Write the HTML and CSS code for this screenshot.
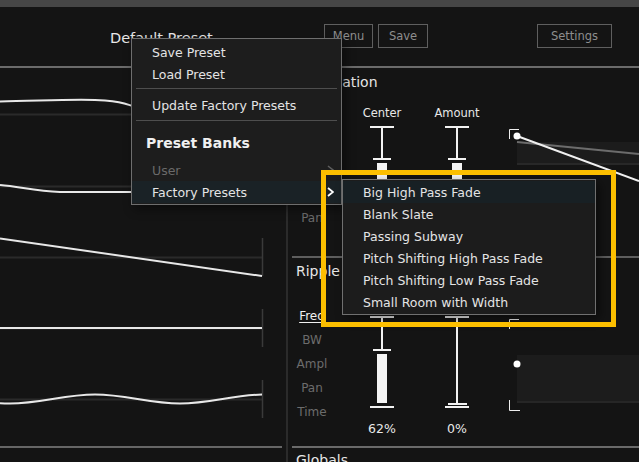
FILE: index.html
```html
<!DOCTYPE html>
<html lang="en">
<head>
<meta charset="utf-8">
<title>Preset Menu</title>
<link rel="stylesheet" href="styles.css">
</head>
<body>
<div class="app">
  <div class="topstrip"></div>
  <header class="header">
    <div class="preset-name">Default Preset</div>
    <div class="btn-group">
      <button class="btn btn--menu">Menu</button>
      <button class="btn btn--save">Save</button>
    </div>
    <button class="btn btn--settings">Settings</button>
  </header>

  <main class="main">
    <section class="left">
      <div class="tracks">
        <svg class="tracks-svg" width="282" height="378" viewBox="0 68 282 378">
          <g stroke="#2a2a2a" stroke-width="2">
            <line x1="0" y1="114.5" x2="262" y2="114.5"/>
            <line x1="0" y1="186.5" x2="262" y2="186.5"/>
            <line x1="0" y1="257.5" x2="262" y2="257.5"/>
            <line x1="0" y1="328.5" x2="262" y2="328.5"/>
            <line x1="0" y1="399.5" x2="262" y2="399.5"/>
          </g>
          <g stroke="#3a3a3a" stroke-width="1.5">
            <line x1="262.5" y1="95" x2="262.5" y2="133"/>
            <line x1="262.5" y1="167" x2="262.5" y2="205"/>
            <line x1="262.5" y1="238" x2="262.5" y2="276"/>
            <line x1="262.5" y1="309" x2="262.5" y2="347"/>
            <line x1="262.5" y1="380" x2="262.5" y2="418"/>
          </g>
          <svg x="0" y="68" width="262" height="378" viewBox="0 68 262 378">
            <g stroke="#e8e8e8" stroke-width="2" fill="none">
              <path d="M0 101.5 C40 101 80 98.5 105 100.5 S125 105 140 108 C180 116 220 125 262 127"/>
              <path d="M0 185 C20 186.5 35 191.5 60 192 L262 192"/>
              <path d="M0 238.5 L262 276"/>
              <path d="M0 328 L262 328"/>
              <path d="M0 403.2 C3 403.4 6 403.5 10 403.5 C40.6 403.5 64.4 394.5 95 394.5 C125.6 394.5 149.4 403.5 180 403.5 C210.6 403.5 234.4 394.5 265 394.5"/>
            </g>
          </svg>
        </svg>
      </div>
    </section>

    <div class="divider"><div class="divider-line"></div></div>

    <section class="right">
      <div class="panel panel--auto">
        <h2 class="panel-title">Automation</h2>
        <div class="panel-body">
          <ul class="params params--auto">
            <li class="param">Pan</li>
          </ul>
          <div class="col">
            <div class="col-label">Center</div>
            <div class="slider">
              <div class="slider-cap"></div>
              <div class="slider-stem" style="height:30px"></div>
              <div class="slider-knob"></div>
              <div class="slider-fill" style="height:49px"></div>
              <div class="slider-cap"></div>
            </div>
          </div>
          <div class="col">
            <div class="col-label">Amount</div>
            <div class="slider">
              <div class="slider-cap"></div>
              <div class="slider-stem" style="height:30px"></div>
              <div class="slider-knob"></div>
              <div class="slider-fill" style="height:49px"></div>
              <div class="slider-cap"></div>
            </div>
          </div>
          <svg class="graph" width="130" height="92" viewBox="0 0 130 92">
            <rect x="8" y="13" width="122" height="23" fill="#1c1c1c"/>
            <rect x="8" y="34" width="122" height="2" fill="#282828"/>
            <path d="M0.5 10V0.5H10" stroke="#eeeeee" fill="none"/>
            <path d="M0.5 81V91.5H11" stroke="#eeeeee" fill="none"/>
            <line x1="8" y1="13" x2="130" y2="25" stroke="#6c6c6c" stroke-width="2"/>
            <line x1="8" y1="7" x2="130" y2="52" stroke="#f0f0f0" stroke-width="2"/>
            <circle cx="8" cy="7" r="3.5" fill="#ffffff"/>
          </svg>
        </div>
      </div>

      <div class="panel panel--ripple">
        <h2 class="panel-title">Ripple</h2>
        <div class="panel-body">
          <ul class="params params--ripple">
            <li class="param param--active">Freq</li>
            <li class="param">BW</li>
            <li class="param">Ampl</li>
            <li class="param">Pan</li>
            <li class="param">Time</li>
          </ul>
          <div class="col">
            <div class="col-label"></div>
            <div class="slider">
              <div class="slider-cap"></div>
              <div class="slider-stem" style="height:31px"></div>
              <div class="slider-knob"></div>
              <div class="slider-fill" style="height:49px"></div>
              <div class="slider-cap"></div>
            </div>
            <div class="col-value">62%</div>
          </div>
          <div class="col">
            <div class="col-label"></div>
            <div class="slider slider--zero">
              <div class="slider-cap"></div>
              <div class="slider-stem" style="height:85px"></div>
              <div class="slider-knob"></div>
              <div class="slider-fill"></div>
              <div class="slider-cap slider-cap--bottom"></div>
            </div>
            <div class="col-value">0%</div>
          </div>
          <svg class="graph" width="130" height="92" viewBox="0 0 130 92">
            <rect x="8" y="36" width="122" height="48" fill="#1c1c1c"/>
            <rect x="8" y="82" width="122" height="2" fill="#262626"/>
            <path d="M0.5 10V0.5H10" stroke="#eeeeee" fill="none"/>
            <path d="M0.5 81V91.5H11" stroke="#eeeeee" fill="none"/>
            <circle cx="8" cy="45" r="3.5" fill="#ffffff"/>
          </svg>
        </div>
      </div>

      <div class="panel panel--globals">
        <h2 class="panel-title">Globals</h2>
      </div>
    </section>
  </main>

  <div class="menu">
    <div class="menu-item">Save Preset</div>
    <div class="menu-item">Load Preset</div>
    <div class="menu-sep"></div>
    <div class="menu-item">Update Factory Presets</div>
    <div class="menu-sep menu-sep--wide"></div>
    <div class="menu-heading">Preset Banks</div>
    <div class="menu-item menu-item--disabled">User
      <svg class="chevron" width="7" height="10" viewBox="0 0 7 10"><path d="M1 1l5 4-5 4" fill="none" stroke="#5e5e5e" stroke-width="1.6"/></svg>
    </div>
    <div class="menu-item menu-item--active">Factory Presets
      <svg class="chevron" width="7" height="10" viewBox="0 0 7 10"><path d="M1 1l5 4-5 4" fill="none" stroke="#ffffff" stroke-width="1.8"/></svg>
    </div>
  </div>

  <div class="submenu">
    <div class="menu-item menu-item--active">Big High Pass Fade</div>
    <div class="menu-item">Blank Slate</div>
    <div class="menu-item">Passing Subway</div>
    <div class="menu-item">Pitch Shifting High Pass Fade</div>
    <div class="menu-item">Pitch Shifting Low Pass Fade</div>
    <div class="menu-item">Small Room with Width</div>
  </div>

  <div class="highlight-box"></div>
</div>
</body>
</html>
```

FILE: styles.css
```css
* { box-sizing: border-box; }

html, body {
  margin: 0;
  padding: 0;
  background: #141414;
  width: 639px;
  height: 462px;
  overflow: hidden;
}

body {
  font-family: "DejaVu Sans", sans-serif;
  color: #e6e6e6;
}

.app {
  position: relative;
  width: 639px;
  height: 462px;
  overflow: hidden;
}

.topstrip {
  height: 7px;
  background: #464646;
}

.header {
  height: 61px;
  display: flex;
  align-items: flex-start;
  border-bottom: 2px solid #6b6b6b;
}

.preset-name {
  margin-left: 110px;
  margin-top: 22px;
  width: 214px;
  font-size: 14.5px;
  line-height: 18px;
  color: #e8e8e8;
  white-space: nowrap;
}

.btn-group {
  display: flex;
  gap: 5px;
  margin-top: 17px;
}

.btn {
  height: 24px;
  padding: 1px 0 0;
  background: transparent;
  border: 1px solid #5f5f5f;
  color: #8e8e8e;
  font-family: "DejaVu Sans", sans-serif;
  font-size: 11.5px;
  line-height: 21px;
  text-align: center;
}

.btn--menu { width: 49px; }
.btn--save { width: 50px; }
.btn--settings {
  width: 75px;
  margin-left: auto;
  margin-right: 27px;
  margin-top: 17px;
}

.main {
  display: flex;
  height: 394px;
}

.left {
  width: 282px;
  flex-shrink: 0;
}

.tracks {
  height: 380px;
  border-bottom: 2px solid #666666;
}

.tracks-svg { display: block; }

.divider {
  width: 10px;
  flex-shrink: 0;
}

.divider-line {
  margin-left: 4px;
  width: 2px;
  height: 100%;
  background: #2b2b2b;
}

.right {
  flex: 1;
  min-width: 0;
}

.panel { overflow: hidden; }

.panel--auto {
  height: 188px;
  padding-top: 6px;
}

.panel--ripple {
  height: 190px;
  border-top: 2px solid #5e5e5e;
  padding-top: 5px;
}

.panel--globals {
  border-top: 2px solid #6a6a6a;
  padding-top: 4px;
}

.panel-title {
  margin: 0;
  padding-left: 4px;
  font-size: 14px;
  line-height: 17px;
  font-weight: normal;
  color: #e6e6e6;
}

.panel-body {
  display: flex;
  align-items: flex-start;
  margin-top: 13px;
}

.panel--ripple .panel-body { margin-top: 14px; }

.params {
  list-style: none;
  margin: 0;
  padding: 0;
  width: 40px;
  flex-shrink: 0;
  text-align: center;
  font-size: 12px;
  line-height: 24px;
  color: #6c6c6c;
}

.params--auto { margin-top: 102px; }
.params--ripple { margin-top: 10px; }

.param--active {
  color: #f0f0f0;
  text-decoration: underline;
  text-underline-offset: 2px;
}

.col {
  width: 50px;
  margin-left: 25px;
  flex-shrink: 0;
  display: flex;
  flex-direction: column;
  align-items: center;
}

.col-label {
  height: 16px;
  padding-top: 2px;
  font-size: 11.5px;
  line-height: 14px;
  color: #e8e8e8;
  white-space: nowrap;
}

.slider {
  margin-top: 6px;
  display: flex;
  flex-direction: column;
  align-items: center;
}

.slider-cap {
  width: 24px;
  height: 2px;
  background: #f2f2f2;
}

.slider-stem {
  width: 2px;
  background: #f2f2f2;
}

.slider-knob {
  width: 18px;
  height: 2px;
  background: #f2f2f2;
}

.slider-fill {
  width: 10px;
  margin: 3px 0;
  background: #f4f4f4;
}

.slider--zero .slider-knob { width: 19px; }
.slider--zero .slider-fill { display: none; }
.slider--zero .slider-cap--bottom { margin-top: 1px; }

.col-value {
  margin-top: 13px;
  font-size: 12.5px;
  line-height: 15px;
  color: #e8e8e8;
}

.graph {
  display: block;
  flex-shrink: 0;
  margin-left: 27px;
  margin-top: 25px;
}

/* Popup menus */
.menu {
  position: absolute;
  left: 131px;
  top: 38px;
  width: 211px;
  height: 167px;
  padding-top: 2px;
  background: #1d1d1d;
  border: 1px solid #6e6e6e;
  box-shadow: 3px 4px 10px rgba(0, 0, 0, 0.45);
}

.menu-item {
  height: 22px;
  display: flex;
  align-items: center;
  justify-content: space-between;
  padding: 2px 7px 0 20px;
  font-size: 12.5px;
  line-height: 20px;
  color: #e4e4e4;
  white-space: nowrap;
}

.menu-item--disabled { color: #6a6a6a; margin-top: 5px; }
.menu-item--active { background: #1a2226; }

.menu-sep {
  height: 1px;
  margin: 3px 4px 5px;
  background: #4e4e4e;
}

.menu-sep--wide { margin: 4px 4px 11px; }

.menu-heading {
  height: 22px;
  padding: 1px 0 0 14px;
  font-size: 14px;
  line-height: 21px;
  font-weight: bold;
  color: #f0f0f0;
}

.chevron { display: block; margin-top: -2px; }

.submenu {
  position: absolute;
  left: 342px;
  top: 179px;
  width: 254px;
  height: 136px;
  padding-top: 1px;
  background: #1c1c1c;
  border: 1px solid #707070;
  box-shadow: 4px 4px 10px rgba(0, 0, 0, 0.45);
}

.submenu .menu-item--active { background: #182024; }

.highlight-box {
  position: absolute;
  left: 321px;
  top: 170px;
  width: 295px;
  height: 157px;
  border: 5px solid #fcbf00;
}
```
